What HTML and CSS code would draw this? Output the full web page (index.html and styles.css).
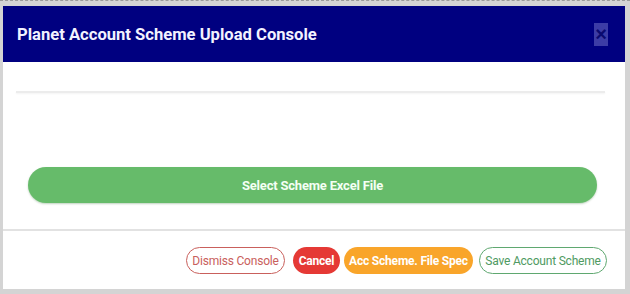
FILE: index.html
```html
<!DOCTYPE html>
<html lang="en">
<head>
    <meta charset="UTF-8">
    <meta name="viewport" content="width=device-width, initial-scale=1.0">
    <title>Planet Account Scheme Upload Console</title>
    <link rel="stylesheet" href="styles.css">
</head>
<body>

    <div class="frame">
        <div class="modal">
            <div class="modal-header">
                <h2>Planet Account Scheme Upload Console</h2>
                <span class="close">&times;</span>
            </div>

            <div class="modal-body">
                <hr class="divider">
                <button class="select-btn">Select Scheme Excel File</button>
            </div>

            <div class="modal-footer">
                <button class="btn btn-dismiss">Dismiss Console</button>
                <button class="btn btn-cancel">Cancel</button>
                <button class="btn btn-spec">Acc Scheme. File Spec</button>
                <button class="btn btn-save">Save Account Scheme</button>
            </div>
        </div>
    </div>

</body>
</html>
```

FILE: styles.css
```css
body {
    margin: 0;
    padding: 0;
    font-family: Roboto, Arial, sans-serif;
    background: #fff;
}
.frame {
    width: 630px;
    height: 294px;
    box-sizing: border-box;
    padding: 5px 5px 5px 3px;
    background: #d4d4d4;
    border-top: 1px dashed #9a9a9a;
}
.modal {
    background: #fff;
    height: 100%;
    display: flex;
    flex-direction: column;
}
.modal-header {
    background: #000080;
    height: 56px;
    display: flex;
    align-items: center;
    justify-content: space-between;
    padding: 0 17px 0 14px;
}
.modal-header h2 {
    margin: 0;
    color: #f2f2ff;
    font-size: 16.6px;
    font-weight: bold;
}
.close {
    width: 14px;
    height: 23px;
    line-height: 22px;
    text-align: center;
    background: #3c3ca6;
    color: #0a0a70;
    font-size: 20px;
    font-family: Arial, sans-serif;
    font-weight: bold;
}
.modal-body {
    padding: 0 20px 0 13px;
    height: 167px;
}
.divider {
    margin: 29px 0 0 0;
    border: none;
    height: 2px;
    background: #ececec;
    box-shadow: 0 1px 2px rgba(0, 0, 0, 0.05);
}
.select-btn {
    display: block;
    margin: 74px 0 0 12px;
    width: 569px;
    height: 36px;
    border: none;
    border-radius: 18px;
    background: #66bb6a;
    color: #f4fff4;
    font-family: Roboto, Arial, sans-serif;
    font-size: 13px;
    font-weight: bold;
    letter-spacing: -0.2px;
    box-shadow: 0 1px 2px rgba(0, 80, 0, 0.25);
}
.modal-footer {
    border-top: 2px solid #e2e2e2;
    display: flex;
    justify-content: flex-end;
    align-items: center;
    padding: 16px 18px 0 0;
}
.btn {
    height: 27px;
    padding: 0;
    border-radius: 14px;
    font-family: Roboto, Arial, sans-serif;
    font-size: 12px;
    letter-spacing: -0.2px;
    white-space: nowrap;
    background: #fff;
    box-sizing: border-box;
}
.btn-dismiss {
    width: 99px;
    border: 1px solid #c9605c;
    color: #c9605c;
}
.btn-cancel {
    width: 47px;
    margin-left: 8px;
    border: none;
    background: #e53935;
    color: #fff;
    font-weight: bold;
}
.btn-spec {
    width: 129px;
    margin-left: 4px;
    border: none;
    background: #f9a52a;
    color: #fff;
    font-weight: bold;
}
.btn-save {
    width: 128px;
    margin-left: 6px;
    border: 1px solid #5fa870;
    color: #4f9a62;
}
```
